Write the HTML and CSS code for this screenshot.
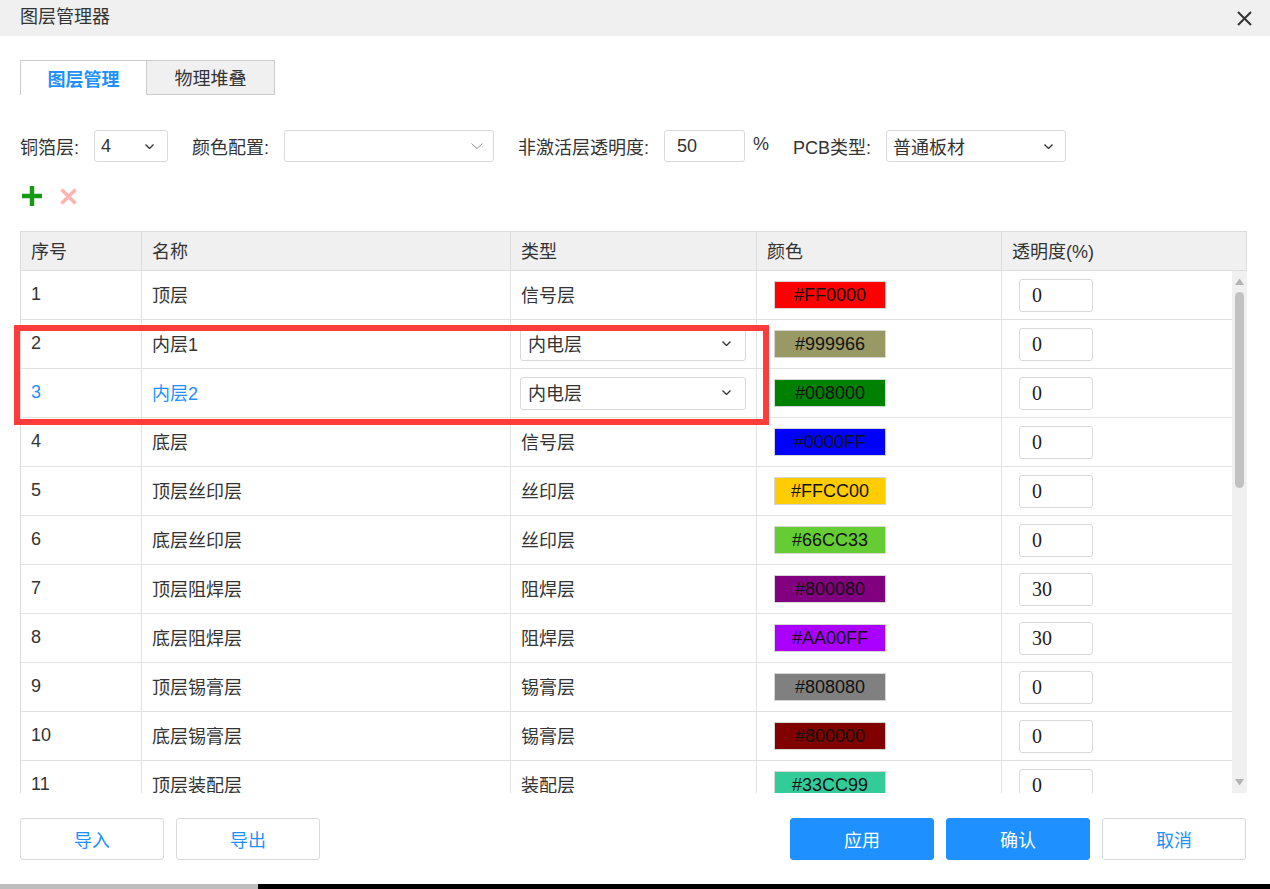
FILE: index.html
```html
<!DOCTYPE html>
<html lang="zh-CN">
<head>
<meta charset="utf-8">
<title>图层管理器</title>
<link rel="stylesheet" href="styles.css">
</head>
<body>
<div class="page">
  <div class="dialog">
    <header class="titlebar">
      <span class="title">图层管理器</span>
      <span class="close">
        <svg width="15" height="15" viewBox="0 0 15 15"><path d="M1 1 L14 14 M14 1 L1 14" stroke="#333" stroke-width="2" fill="none"/></svg>
      </span>
    </header>
    <main class="content">
      <div class="tabs">
        <div class="tab tab-active">图层管理</div>
        <div class="tab tab-idle">物理堆叠</div>
      </div>

      <div class="form-row">
        <span class="lbl">铜箔层:</span>
        <div class="field field-copper">
          <span>4</span>
          <svg class="chev" width="9" height="5" viewBox="0 0 9 5"><path d="M0.5 0.5 L4.5 4.5 L8.5 0.5" fill="none" stroke="#333" stroke-width="1.3"/></svg>
        </div>
        <span class="lbl">颜色配置:</span>
        <div class="field field-scheme">
          <span></span>
          <svg class="chev" width="12" height="6" viewBox="0 0 12 6"><path d="M0.5 0.5 L6 5.5 L11.5 0.5" fill="none" stroke="#999" stroke-width="1"/></svg>
        </div>
        <span class="lbl">非激活层透明度:</span>
        <div class="field field-input">50</div>
        <span class="unit">%</span>
        <span class="lbl">PCB类型:</span>
        <div class="field field-pcb">
          <span>普通板材</span>
          <svg class="chev" width="9" height="5" viewBox="0 0 9 5"><path d="M0.5 0.5 L4.5 4.5 L8.5 0.5" fill="none" stroke="#333" stroke-width="1.3"/></svg>
        </div>
      </div>

      <div class="toolbar">
        <svg class="ic-add" width="20" height="20" viewBox="0 0 20 20"><path d="M10 0 V20 M0 10 H20" stroke="#159a15" stroke-width="4.4" fill="none"/></svg>
        <svg class="ic-del" width="17" height="17" viewBox="0 0 17 17"><path d="M1.5 1.5 L15.5 15.5 M15.5 1.5 L1.5 15.5" stroke="#ffb3b3" stroke-width="3.6" fill="none"/></svg>
      </div>

      <div class="table">
        <div class="thead">
          <div class="th">序号</div>
          <div class="th">名称</div>
          <div class="th">类型</div>
          <div class="th">颜色</div>
          <div class="th">透明度(%)</div>
        </div>
        <div class="tbody">
          <div class="rows">
            <div class="row">
              <div class="td">1</div>
              <div class="td">顶层</div>
              <div class="td">信号层</div>
              <div class="td td-color"><span class="swatch" style="background:#FF0000">#FF0000</span></div>
              <div class="td td-alpha"><span class="alpha">0</span></div>
            </div>
            <div class="row">
              <div class="td">2</div>
              <div class="td">内层1</div>
              <div class="td td-select">
                <div class="cell-select"><span>内电层</span><svg width="9" height="5" viewBox="0 0 9 5"><path d="M0.5 0.5 L4.5 4.5 L8.5 0.5" fill="none" stroke="#333" stroke-width="1.3"/></svg></div>
              </div>
              <div class="td td-color"><span class="swatch" style="background:#999966">#999966</span></div>
              <div class="td td-alpha"><span class="alpha">0</span></div>
            </div>
            <div class="row row-selected">
              <div class="td td-sel">3</div>
              <div class="td td-sel">内层2</div>
              <div class="td td-select">
                <div class="cell-select"><span>内电层</span><svg width="9" height="5" viewBox="0 0 9 5"><path d="M0.5 0.5 L4.5 4.5 L8.5 0.5" fill="none" stroke="#333" stroke-width="1.3"/></svg></div>
              </div>
              <div class="td td-color"><span class="swatch" style="background:#008000">#008000</span></div>
              <div class="td td-alpha"><span class="alpha">0</span></div>
            </div>
            <div class="row">
              <div class="td">4</div>
              <div class="td">底层</div>
              <div class="td">信号层</div>
              <div class="td td-color"><span class="swatch" style="background:#0000FF">#0000FF</span></div>
              <div class="td td-alpha"><span class="alpha">0</span></div>
            </div>
            <div class="row">
              <div class="td">5</div>
              <div class="td">顶层丝印层</div>
              <div class="td">丝印层</div>
              <div class="td td-color"><span class="swatch" style="background:#FFCC00">#FFCC00</span></div>
              <div class="td td-alpha"><span class="alpha">0</span></div>
            </div>
            <div class="row">
              <div class="td">6</div>
              <div class="td">底层丝印层</div>
              <div class="td">丝印层</div>
              <div class="td td-color"><span class="swatch" style="background:#66CC33">#66CC33</span></div>
              <div class="td td-alpha"><span class="alpha">0</span></div>
            </div>
            <div class="row">
              <div class="td">7</div>
              <div class="td">顶层阻焊层</div>
              <div class="td">阻焊层</div>
              <div class="td td-color"><span class="swatch" style="background:#800080">#800080</span></div>
              <div class="td td-alpha"><span class="alpha">30</span></div>
            </div>
            <div class="row">
              <div class="td">8</div>
              <div class="td">底层阻焊层</div>
              <div class="td">阻焊层</div>
              <div class="td td-color"><span class="swatch" style="background:#AA00FF">#AA00FF</span></div>
              <div class="td td-alpha"><span class="alpha">30</span></div>
            </div>
            <div class="row">
              <div class="td">9</div>
              <div class="td">顶层锡膏层</div>
              <div class="td">锡膏层</div>
              <div class="td td-color"><span class="swatch" style="background:#808080">#808080</span></div>
              <div class="td td-alpha"><span class="alpha">0</span></div>
            </div>
            <div class="row">
              <div class="td">10</div>
              <div class="td">底层锡膏层</div>
              <div class="td">锡膏层</div>
              <div class="td td-color"><span class="swatch" style="background:#800000">#800000</span></div>
              <div class="td td-alpha"><span class="alpha">0</span></div>
            </div>
            <div class="row">
              <div class="td">11</div>
              <div class="td">顶层装配层</div>
              <div class="td">装配层</div>
              <div class="td td-color"><span class="swatch" style="background:#33CC99">#33CC99</span></div>
              <div class="td td-alpha"><span class="alpha">0</span></div>
            </div>
          </div>
          <div class="scrollbar">
            <svg width="9" height="7" viewBox="0 0 9 7"><path d="M0 7 L4.5 0.5 L9 7 Z" fill="#b4b4b4"/></svg>
            <div class="sb-thumb"></div>
            <div class="sb-spacer"></div>
            <svg width="9" height="7" viewBox="0 0 9 7"><path d="M0 0 L9 0 L4.5 6.5 Z" fill="#b4b4b4"/></svg>
          </div>
        </div>
        <div class="highlight"></div>
      </div>

      <div class="footer">
        <div class="btn-group">
          <div class="btn btn-default">导入</div>
          <div class="btn btn-default">导出</div>
        </div>
        <div class="btn-group">
          <div class="btn btn-primary">应用</div>
          <div class="btn btn-primary">确认</div>
          <div class="btn btn-default">取消</div>
        </div>
      </div>
    </main>
  </div>
  <div class="taskbar">
    <div class="tb-left"></div>
    <div class="tb-right"></div>
  </div>
</div>
</body>
</html>
```

FILE: styles.css
```css
* { box-sizing: border-box; }
html, body { margin: 0; padding: 0; }
body {
  width: 1270px;
  height: 889px;
  overflow: hidden;
  background: #fff;
  font-family: "Liberation Sans", "Noto Sans CJK SC", sans-serif;
  font-size: 18px;
  color: #333;
}
.page { height: 889px; display: flex; flex-direction: column; }
.dialog { flex: 1; display: flex; flex-direction: column; }

.titlebar {
  height: 36px;
  background: #f0f0f0;
  display: flex;
  align-items: center;
  justify-content: space-between;
  padding: 0 18px 2px 20px;
}
.title { font-size: 18px; line-height: 20px; color: #333; }
.close { width: 15px; height: 15px; display: flex; margin-top: 2px; }

.content { padding: 24px 24px 0 20px; display: flex; flex-direction: column; }

.tabs { display: flex; height: 35px; }
.tab {
  height: 35px;
  display: flex;
  align-items: center;
  justify-content: center;
  border: 1px solid #cccccc;
  font-size: 18px;
  padding-bottom: 1px;
}
.tab-active { width: 127px; border-bottom: none; color: #1e90ff; font-weight: bold; background: #fff; }
.tab-idle { width: 128px; border-left: none; background: #f0f0f0; color: #333; }

.form-row { margin-top: 35px; height: 32px; display: flex; align-items: center; }
.lbl { margin-right: 15px; white-space: nowrap; }
.field {
  height: 32px;
  border: 1px solid #d9d9d9;
  border-radius: 3px;
  display: flex;
  align-items: center;
  justify-content: space-between;
  padding: 0 13px 0 6px;
  margin-right: 24px;
  background: #fff;
}
.field-copper { width: 74px; }
.field-scheme { width: 210px; padding-right: 10px; }
.field-input { width: 81px; padding-left: 12px; margin-right: 8px; }
.field-pcb { width: 180px; padding-right: 12px; margin-right: 0; }
.unit { margin-right: 24px; margin-top: -4px; }

.toolbar { margin-top: 24px; height: 20px; display: flex; align-items: center; }
.ic-add { margin-left: 2px; }
.ic-del { margin-left: 18px; }

.table { margin-top: 25px; position: relative; width: 1227px; border-left: 1px solid #dcdcdc; }
.thead {
  display: grid;
  grid-template-columns: 121px 369px 246px 245px 245px;
  height: 40px;
  background: #f0f0f0;
  border-top: 1px solid #dcdcdc;
  border-bottom: 1px solid #dcdcdc;
}
.th { display: flex; align-items: center; padding: 0 0 3px 10px; border-right: 1px solid #dcdcdc; }

.tbody { display: flex; height: 522px; }
.rows { width: 1211px; overflow: hidden; }
.row {
  display: grid;
  grid-template-columns: 121px 369px 246px 245px 230px;
  height: 49px;
  border-bottom: 1px solid #e2e2e2;
}
.td { display: flex; align-items: center; padding: 0 0 2px 10px; border-right: 1px solid #e2e2e2; white-space: nowrap; }
.td:last-child { border-right: none; }
.row-selected .td-sel { color: #1e90ff; }

.td-select { padding: 0 0 0 9px; }
.cell-select {
  width: 226px;
  height: 33px;
  border: 1px solid #d9d9d9;
  border-radius: 3px;
  display: flex;
  align-items: center;
  justify-content: space-between;
  padding: 0 14px 2px 7px;
}

.td-color { padding: 0 0 0 17px; }
.swatch {
  width: 112px;
  height: 28px;
  border: 1px solid #d6d6d6;
  display: flex;
  align-items: center;
  justify-content: center;
  color: #111;
  font-size: 18px;
}

.td-alpha { padding: 0 0 0 17px; }
.alpha {
  width: 74px;
  height: 33px;
  border: 1px solid #d9d9d9;
  border-radius: 3px;
  display: flex;
  align-items: center;
  padding-left: 12px;
  font-family: "Liberation Serif", serif;
  font-size: 20px;
  color: #222;
}

.scrollbar {
  width: 15px;
  background: #f0f0f0;
  display: flex;
  flex-direction: column;
  align-items: center;
  padding: 7px 0 7px;
}
.sb-thumb { width: 9px; height: 196px; margin-top: 7px; background: #c1c1c1; border-radius: 5px; }
.sb-spacer { flex: 1; }

.highlight {
  position: absolute;
  left: -7px;
  top: 94px;
  width: 755px;
  height: 100px;
  border: 6px solid #ff3c3c;
  pointer-events: none;
}

.footer { margin-top: 25px; display: flex; justify-content: space-between; }
.btn-group { display: flex; gap: 12px; }
.btn {
  width: 144px;
  height: 42px;
  border-radius: 3px;
  font-size: 18px;
  display: flex;
  align-items: center;
  justify-content: center;
  cursor: pointer;
}
.btn-default { border: 1px solid #d9d9d9; color: #1e90ff; background: #fff; }
.btn-primary { border: 1px solid #1e90ff; color: #fff; background: #1e90ff; }

.taskbar { height: 5px; display: flex; }
.tb-left { width: 258px; background: #bdbdbd; }
.tb-right { flex: 1; background: #000; }
```
